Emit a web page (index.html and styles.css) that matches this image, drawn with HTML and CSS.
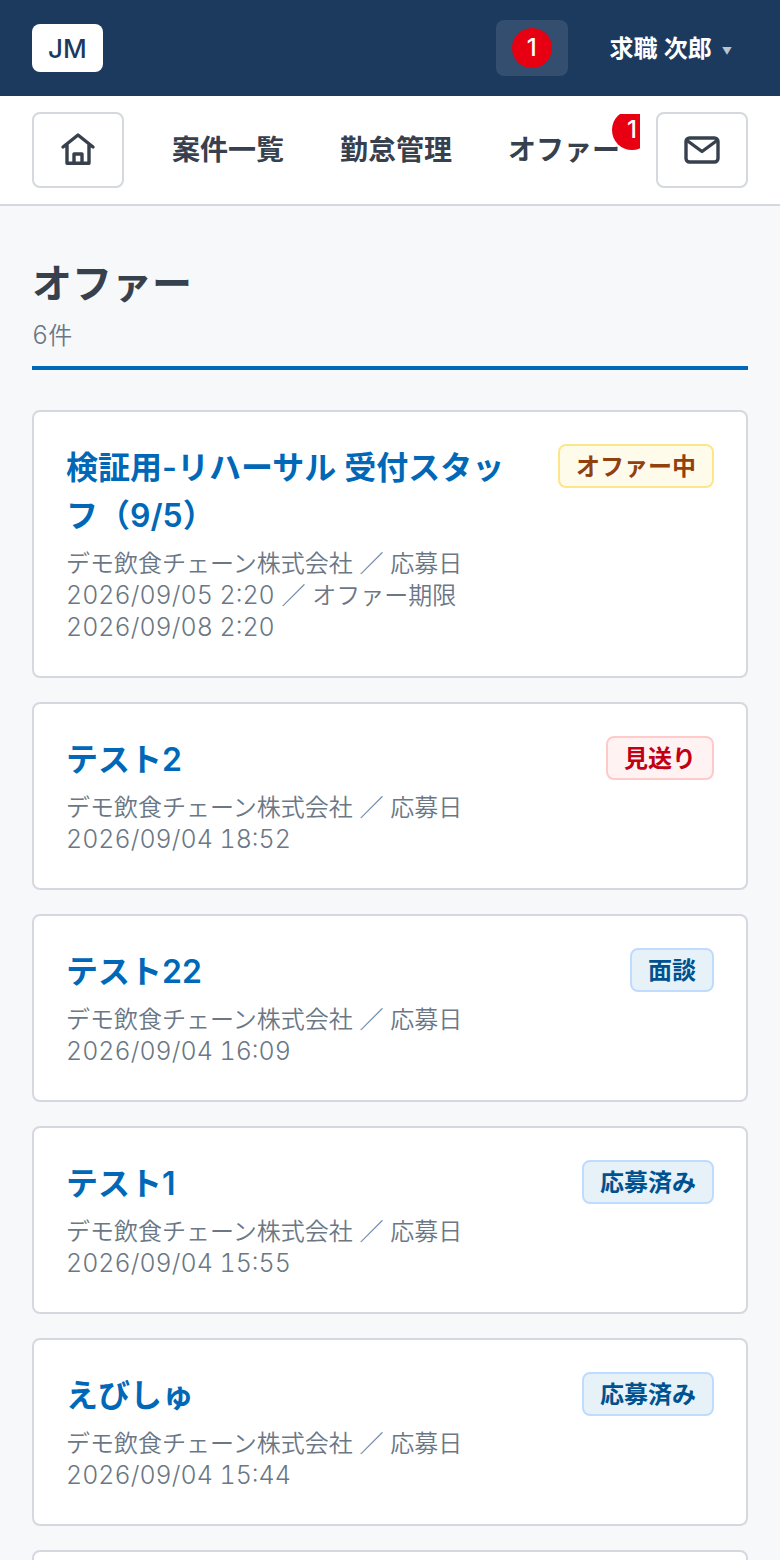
FILE: index.html
```html
<!DOCTYPE html>
<html lang="ja">
<head>
  <meta charset="UTF-8">
  <meta name="viewport" content="width=device-width, initial-scale=1.0">
  <title>オファー</title>
  <link rel="stylesheet" href="styles.css">
</head>
<body>
  <header class="header">
    <a href="#" class="logo">JM</a>
    <div class="header-right">
      <button type="button" class="notice"><span class="count">1</span></button>
      <button type="button" class="user">求職 次郎 <span class="caret">▼</span></button>
    </div>
  </header>

  <nav class="nav">
    <a href="#" class="nav-icon">
      <svg viewBox="0 0 36 36" width="36" height="36" fill="none" stroke="currentColor" stroke-width="3.4" stroke-linecap="round" stroke-linejoin="round">
        <path d="M3 15 18 3l15 12M7 12.500V31.300h22V12.500"/>
        <path d="M14 31v-9h8v9"/>
      </svg>
    </a>
    <div class="nav-links">
      <a href="#">案件一覧</a>
      <a href="#">勤怠管理</a>
      <a href="#">オファー<span class="count nav-count">1</span></a>
    </div>
    <a href="#" class="nav-icon">
      <svg viewBox="0 0 36 36" width="36" height="36" fill="none" stroke="currentColor" stroke-width="3.4" stroke-linecap="round" stroke-linejoin="round">
        <rect x="2" y="6" width="32" height="24" rx="3.500"/>
        <path d="M3 8.500 18 19.500 33 8.500"/>
      </svg>
    </a>
  </nav>

  <main>
    <div class="page-head">
      <h1>オファー</h1>
      <p><span class="num">6</span>件</p>
    </div>

    <div class="list">
      <article class="card">
        <div class="card-body">
          <h2><a href="#">検証用-リハーサル 受付スタッフ（9/5）</a></h2>
          <p>デモ飲食チェーン株式会社 ／ 応募日 <time class="num">2026/09/05 2:20</time> ／ オファー期限 <time class="num">2026/09/08 2:20</time></p>
        </div>
        <span class="status status-offer">オファー中</span>
      </article>

      <article class="card">
        <div class="card-body">
          <h2><a href="#">テスト2</a></h2>
          <p>デモ飲食チェーン株式会社 ／ 応募日 <time class="num">2026/09/04 18:52</time></p>
        </div>
        <span class="status status-rejected">見送り</span>
      </article>

      <article class="card">
        <div class="card-body">
          <h2><a href="#">テスト22</a></h2>
          <p>デモ飲食チェーン株式会社 ／ 応募日 <time class="num">2026/09/04 16:09</time></p>
        </div>
        <span class="status">面談</span>
      </article>

      <article class="card">
        <div class="card-body">
          <h2><a href="#">テスト1</a></h2>
          <p>デモ飲食チェーン株式会社 ／ 応募日 <time class="num">2026/09/04 15:55</time></p>
        </div>
        <span class="status">応募済み</span>
      </article>

      <article class="card">
        <div class="card-body">
          <h2><a href="#">えびしゅ</a></h2>
          <p>デモ飲食チェーン株式会社 ／ 応募日 <time class="num">2026/09/04 15:44</time></p>
        </div>
        <span class="status">応募済み</span>
      </article>

      <article class="card"></article>
    </div>
  </main>
</body>
</html>
```
FILE: styles.css
```css
* {
  box-sizing: border-box;
}

body {
  margin: 0;
  height: 100vh;
  display: flex;
  flex-direction: column;
  font-family: Inter, "Noto Sans CJK JP", sans-serif;
  font-size: 24px;
  line-height: 32px;
  color: #37404d;
  background: #f6f8fa;
}

h1, h2, p {
  margin: 0;
}

a {
  color: inherit;
  text-decoration: none;
}

button {
  border: 0;
  background: none;
  font: inherit;
  color: inherit;
  cursor: pointer;
}

svg {
  display: block;
}

/* header */
.header {
  flex: none;
  display: flex;
  align-items: center;
  justify-content: space-between;
  height: 96px;
  padding: 0 32px;
  background: #1c3a5e;
  color: #fff;
}

.logo {
  padding: 9px 16px 7px;
  border-radius: 8px;
  background: #fff;
  color: #1c3a5e;
  font-size: 26px;
  font-weight: 500;
}

.header-right {
  display: flex;
  align-items: center;
  gap: 26px;
}

.notice {
  padding: 8px 16px;
  border-radius: 8px;
  background: rgba(255, 255, 255, 0.1);
}

.count {
  display: block;
  width: 40px;
  height: 40px;
  border-radius: 50%;
  background: #e60012;
  color: #fff;
  font-size: 24px;
  font-weight: 500;
  line-height: 40px;
  text-align: center;
}

.user {
  display: flex;
  align-items: center;
  gap: 10px;
  padding: 10px 16px 8px;
  font-weight: 600;
}

.caret {
  padding-top: 4px;
  font-size: 10px;
  opacity: 0.7;
}

/* nav */
.nav {
  flex: none;
  display: flex;
  align-items: center;
  gap: 16px;
  padding: 16px 32px;
  border-bottom: 2px solid #d5d8de;
  background: #fff;
}

.nav-icon {
  flex: none;
  padding: 18px 26px;
  border: 2px solid #d5d8de;
  border-radius: 8px;
}

.nav-links {
  flex: 1;
  display: flex;
  gap: 8px;
  min-width: 0;
  padding: 0 8px;
  overflow: hidden;
}

.nav-links a {
  position: relative;
  flex: none;
  padding: 20px 24px;
  font-size: 28px;
  font-weight: 600;
}

.nav-links .nav-count {
  position: absolute;
  top: -4px;
  right: -8px;
}

/* list */
main {
  flex: 1;
  min-height: 0;
  padding: 48px 32px;
  overflow-y: auto;
  scrollbar-width: none;
}

.page-head {
  margin-bottom: 40px;
  padding-bottom: 14px;
  border-bottom: 4px solid #0068b7;
}

h1 {
  margin-bottom: 6px;
  font-size: 40px;
  font-weight: 700;
  line-height: 60px;
}

.page-head p,
.card p {
  color: #6b7785;
  font-weight: 350;
}

.num {
  font-size: 25px;
  font-weight: 300;
  font-variant-numeric: tabular-nums;
  line-height: 1;
}

.list {
  display: flex;
  flex-direction: column;
  gap: 24px;
}

.card {
  display: flex;
  align-items: flex-start;
  justify-content: space-between;
  gap: 32px;
  padding: 32px;
  border: 2px solid #d5d8de;
  border-radius: 8px;
  background: #fff;
}

.card-body {
  min-width: 0;
}

.card h2 {
  margin-bottom: 8px;
  color: #0068b7;
  font-size: 32px;
  font-weight: 600;
  line-height: 48px;
}

.status {
  flex: none;
  padding: 5px 16px 3px;
  border: 2px solid #bfdbfe;
  border-radius: 8px;
  background: #e6f1f8;
  color: #00528f;
  font-weight: 600;
}

.status-offer {
  border-color: #fde68a;
  background: #fffbeb;
  color: #92400e;
}

.status-rejected {
  border-color: #fecaca;
  background: #fef2f2;
  color: #c10015;
}
```
